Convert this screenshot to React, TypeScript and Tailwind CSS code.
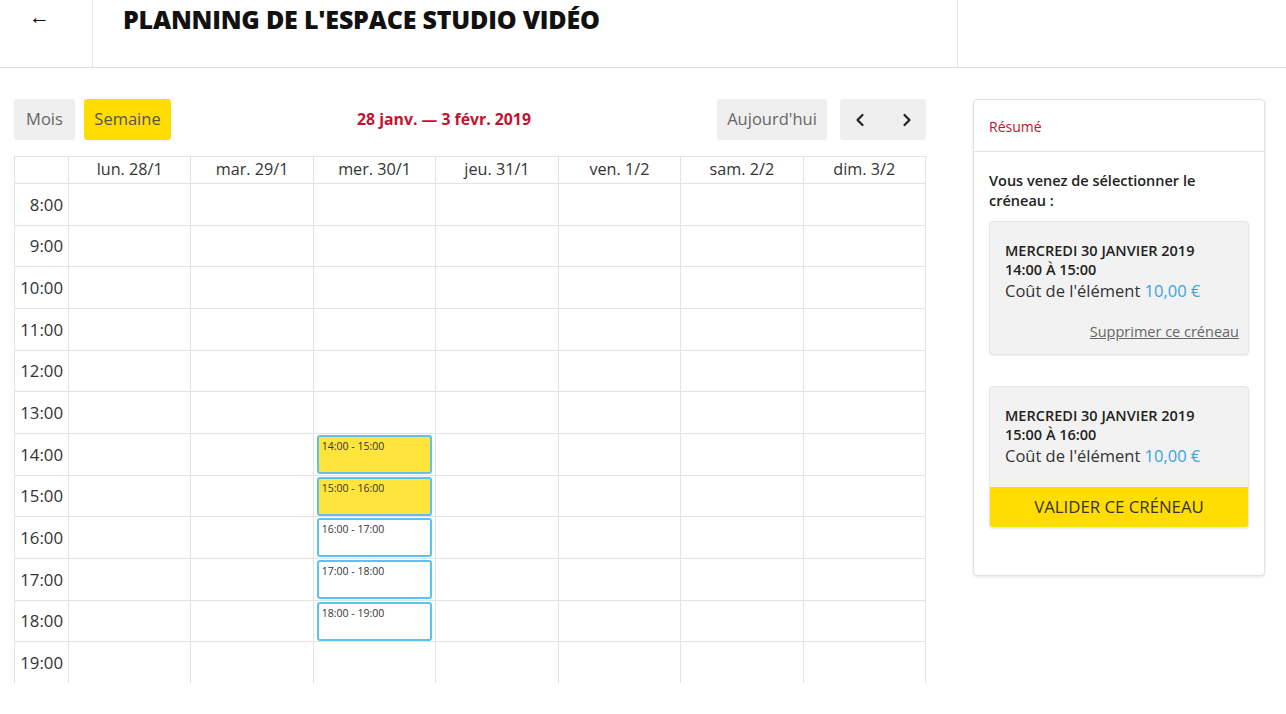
import React from "react";

const days = ["lun. 28/1", "mar. 29/1", "mer. 30/1", "jeu. 31/1", "ven. 1/2", "sam. 2/2", "dim. 3/2"];
const hours = ["8:00", "9:00", "10:00", "11:00", "12:00", "13:00", "14:00", "15:00", "16:00", "17:00", "18:00", "19:00"];

const events: Record<string, { label: string; selected: boolean }> = {
  "14:00": { label: "14:00 - 15:00", selected: true },
  "15:00": { label: "15:00 - 16:00", selected: true },
  "16:00": { label: "16:00 - 17:00", selected: false },
  "17:00": { label: "17:00 - 18:00", selected: false },
  "18:00": { label: "18:00 - 19:00", selected: false },
};

function Chevron({ dir }: { dir: "left" | "right" }) {
  return (
    <svg width="14" height="14" viewBox="0 0 14 14" fill="none">
      <path
        d={dir === "left" ? "M9.5 2 L4.5 7 L9.5 12" : "M4.5 2 L9.5 7 L4.5 12"}
        stroke="#222"
        strokeWidth="2.2"
        strokeLinecap="round"
        strokeLinejoin="round"
      />
    </svg>
  );
}

function SlotHead({ time }: { time: string }) {
  return (
    <div className="pl-[15px] pr-[10px] pt-[19px]">
      <div className="text-[14.5px] leading-[19px] font-semibold text-[#222]">MERCREDI 30 JANVIER 2019</div>
      <div className="text-[14.5px] leading-[19px] font-semibold text-[#222]">{time}</div>
      <div className="text-[16.5px] leading-[24px] text-[#333]">
        Coût de l'élément <span className="text-[#3aa3dc]">10,00 €</span>
      </div>
    </div>
  );
}

export default function App() {
  return (
    <div className="w-[1286px] h-[714px] bg-white overflow-hidden font-['Open_Sans',sans-serif] text-[#333]">
      <header className="flex h-[68px] border-b border-[#dcdcdc]">
        <div className="w-[93px] border-r border-[#e6e6e6] pl-[29px] pt-[1px]">
          <span className="text-[21px] font-extrabold text-[#111] leading-[30px]">←</span>
        </div>
        <div className="w-[865px] border-r border-[#e6e6e6] pl-[30px] pt-[3px]">
          <h1 className="text-[25px] leading-[32px] font-extrabold text-[#111] tracking-[-0.2px]">
            PLANNING DE L'ESPACE STUDIO VIDÉO
          </h1>
        </div>
        <div className="flex-1" />
      </header>

      <main className="flex pl-[14px] pt-[31px]">
        <section className="w-[912px]">
          <div className="flex items-center h-[41px]">
            <div className="flex gap-[9px] w-[157px]">
              <button className="h-[41px] w-[61px] rounded-[3px] bg-[#efefef] text-[16.5px] text-[#666]">Mois</button>
              <button className="h-[41px] w-[87px] rounded-[3px] bg-[#ffdd00] text-[16.5px] text-[#555]">Semaine</button>
            </div>
            <div className="flex-1 text-center text-[15.8px] font-bold text-[#c8102e]">28 janv. — 3 févr. 2019</div>
            <div className="flex gap-[13px]">
              <button className="h-[41px] w-[110px] rounded-[3px] bg-[#efefef] text-[16.5px] text-[#666]">Aujourd'hui</button>
              <button className="h-[41px] w-[86px] rounded-[3px] bg-[#efefef] flex items-center justify-center gap-[33px]">
                <Chevron dir="left" />
                <Chevron dir="right" />
              </button>
            </div>
          </div>

          <div className="mt-[16px] h-[527px] overflow-hidden border-l border-t border-[#e3e3e3]">
            <div className="grid grid-cols-[54px_repeat(7,1fr)] h-[27px]">
              <div className="border-r border-b border-[#e3e3e3]" />
              {days.map((d) => (
                <div key={d} className="border-r border-b border-[#e3e3e3] text-center text-[16.2px] leading-[25px] text-[#333]">
                  {d}
                </div>
              ))}
            </div>
            {hours.map((h) => (
              <div key={h} className="grid grid-cols-[54px_repeat(7,1fr)] h-[41.67px]">
                <div className="border-r border-b border-[#e3e3e3] flex items-center justify-end pr-[5px] text-[16.8px] text-[#333]">
                  {h}
                </div>
                {days.map((d, i) => {
                  const ev = i === 2 ? events[h] : undefined;
                  return (
                    <div key={d} className="border-r border-b border-[#e3e3e3] px-[3px] pt-[1px]">
                      {ev && (
                        <div
                          className={
                            "h-[39px] rounded-[3px] border-2 border-[#5cc3ec] px-[3px] pt-[2px] text-[10.5px] leading-[14px] text-[#333] " +
                            (ev.selected ? "bg-[#ffe53b]" : "bg-white")
                          }
                        >
                          {ev.label}
                        </div>
                      )}
                    </div>
                  );
                })}
              </div>
            ))}
          </div>
        </section>

        <aside className="ml-[47px] w-[292px]">
          <div className="rounded-[4px] border border-[#e2e2e2] shadow-[0_1px_3px_rgba(0,0,0,0.1)] bg-white">
            <div className="h-[52px] border-b border-[#e2e2e2] pl-[15px] flex items-center text-[14px] text-[#c8102e] pt-[1px]">
              Résumé
            </div>
            <div className="px-[15px] pt-[19px] pb-[47px]">
              <p className="text-[14.5px] leading-[20px] font-semibold text-[#222] pr-[20px]">
                Vous venez de sélectionner le créneau :
              </p>
              <div className="mt-[10px] rounded-[4px] bg-[#f2f2f2] border border-[#e6e6e6] shadow-[0_1px_2px_rgba(0,0,0,0.08)] overflow-hidden">
                <SlotHead time="14:00 À 15:00" />
                <div className="flex justify-end pr-[9px] pt-[19px] pb-[12px]">
                  <span className="text-[14.5px] leading-[20px] text-[#666] underline">Supprimer ce créneau</span>
                </div>
              </div>
              <div className="mt-[31px] rounded-[4px] bg-[#f2f2f2] border border-[#e6e6e6] shadow-[0_1px_2px_rgba(0,0,0,0.08)] overflow-hidden">
                <SlotHead time="15:00 À 16:00" />
                <div className="mt-[19px] h-[40px] bg-[#ffdd00] flex items-center justify-center text-[16.8px] text-[#333]">
                  VALIDER CE CRÉNEAU
                </div>
              </div>
            </div>
          </div>
        </aside>
      </main>
    </div>
  );
}
